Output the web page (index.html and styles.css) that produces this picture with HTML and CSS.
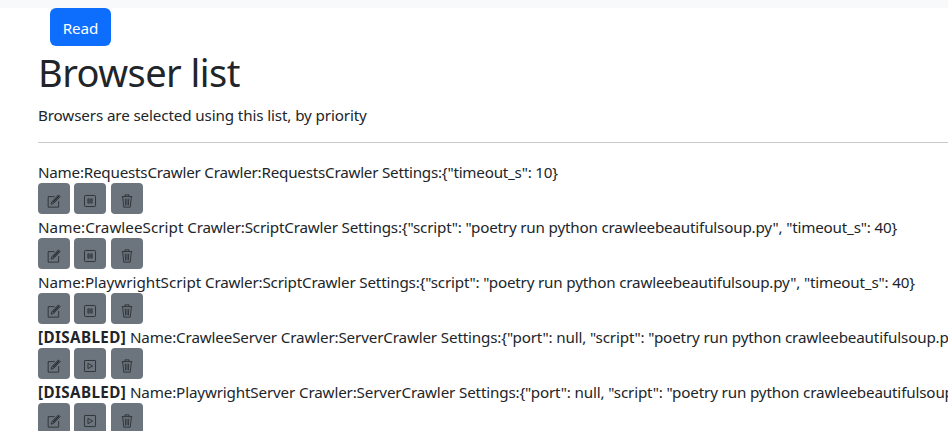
FILE: index.html
```html
<!DOCTYPE html>
<html lang="en">
<head>
<meta charset="utf-8">
<title>Browser list</title>
<link rel="stylesheet" href="styles.css">
</head>
<body>
<svg class="sprite" aria-hidden="true">
  <symbol id="edit" viewBox="0 0 24 24"><path d="M13 4.500H2v18h18V12"/><path class="bold" d="M10 14.500L20.500 3.500"/><path d="M7 17.500l1.500-4.500L19.500 1.500l3 3L11.500 16z"/></symbol>
  <symbol id="pause" viewBox="0 0 24 24"><rect x="2.500" y="2.500" width="19" height="19" rx="2"/><path class="thin" d="M8.500 8h2v8h-2zM13.500 8h2v8h-2zM7 10.300h10M7 13.700h10"/></symbol>
  <symbol id="play" viewBox="0 0 24 24"><rect x="2.500" y="2.500" width="19" height="19" rx="1"/><path d="M8.500 7.500v9l8-4.500z"/></symbol>
  <symbol id="trash" viewBox="0 0 24 24"><path d="M3 4.500h18M8.500 4V1.500h7V4M4.500 5l2 17.500h11l2-17.500M9 8l.5 11.500M12 8v11.500M15 8l-.5 11.500"/></symbol>
</svg>
<div class="topbar"></div>
<main class="container">
  <a class="btn read">Read</a>
  <h1>Browser list</h1>
  <p class="lead">Browsers are selected using this list, by priority</p>
  <hr>
  <div class="entry"><div class="text r1">Name:RequestsCrawler Crawler:RequestsCrawler Settings:{"timeout_s": 10}</div>
    <div class="actions"><a class="btn small"><svg><use href="#edit"/></svg></a><a class="btn small"><svg><use href="#pause"/></svg></a><a class="btn small"><svg><use href="#trash"/></svg></a></div></div>
  <div class="entry"><div class="text r2"><span>Name:CrawleeScript</span> Crawler:ScriptCrawler Settings:{"script": "poetry run python crawleebeautifulsoup.py", "timeout_s": 40}</div>
    <div class="actions"><a class="btn small"><svg><use href="#edit"/></svg></a><a class="btn small"><svg><use href="#pause"/></svg></a><a class="btn small"><svg><use href="#trash"/></svg></a></div></div>
  <div class="entry"><div class="text r3"><span>Name:PlaywrightScript</span> Crawler:ScriptCrawler Settings:{"script": "poetry run python crawleebeautifulsoup.py", "timeout_s": 40}</div>
    <div class="actions"><a class="btn small"><svg><use href="#edit"/></svg></a><a class="btn small"><svg><use href="#pause"/></svg></a><a class="btn small"><svg><use href="#trash"/></svg></a></div></div>
  <div class="entry"><div class="text r4"><b>[DISABLED]</b> Name:CrawleeServer Crawler:ServerCrawler Settings:{"port": null, "script": "poetry run python crawleebeautifulsoup.py", "timeout_s": 40}</div>
    <div class="actions"><a class="btn small"><svg><use href="#edit"/></svg></a><a class="btn small"><svg><use href="#play"/></svg></a><a class="btn small"><svg><use href="#trash"/></svg></a></div></div>
  <div class="entry"><div class="text r5"><b>[DISABLED]</b> Name:PlaywrightServer Crawler:ServerCrawler Settings:{"port": null, "script": "poetry run python crawleebeautifulsoup.py", "timeout_s": 40}</div>
    <div class="actions"><a class="btn small"><svg><use href="#edit"/></svg></a><a class="btn small"><svg><use href="#play"/></svg></a><a class="btn small"><svg><use href="#trash"/></svg></a></div></div>
</main>
</body>
</html>
```
FILE: styles.css
```css
* { box-sizing: border-box; }
html, body { height: 100%; }
body {
  margin: 0;
  overflow: hidden;
  background: #fff;
  color: #212529;
  font: 15.2px/24px "Segoe UI", "Noto Sans", sans-serif;
}
.sprite { display: none; }
.topbar { height: 8px; background: #f8f9fa; }
.container { padding-left: 38px; overflow: hidden; }
.btn { display: flex; align-items: center; justify-content: center; }
.read {
  width: 61px;
  height: 38px;
  margin-left: 12px;
  padding-top: 2px;
  border-radius: 6px;
  background: #0d6efd;
  color: #fff;
  letter-spacing: -0.1px;
}
h1 { margin: 2px 0 7px; font-size: 38px; font-weight: 400; line-height: 48px; letter-spacing: -0.55px; }
.lead { height: 24px; margin: 0; letter-spacing: -0.12px; }
hr { margin: 15px 0 17px; border: 0; border-top: 1px solid #c8c9ca; }
.entry { height: 55px; }
.text { height: 23px; letter-spacing: -0.2px; white-space: pre; }
.r1 { letter-spacing: -0.22px; }
.r2, .r3 { letter-spacing: -0.18px; }
.r2 span { letter-spacing: 0.05px; }
.r3 span { letter-spacing: 0; }
.r4, .r5 { letter-spacing: -0.15px; }
.text b { letter-spacing: 0.4px; }
.actions { display: flex; gap: 4.4px; }
.small { width: 32px; height: 31px; padding-top: 5px; border-radius: 4px; background: #6c757d; }
.small svg { width: 14px; height: 14px; fill: none; stroke: #212529; stroke-width: 1.35; }
.bold { stroke-width: 2; }
.thin { stroke-width: 0.9; }
```
